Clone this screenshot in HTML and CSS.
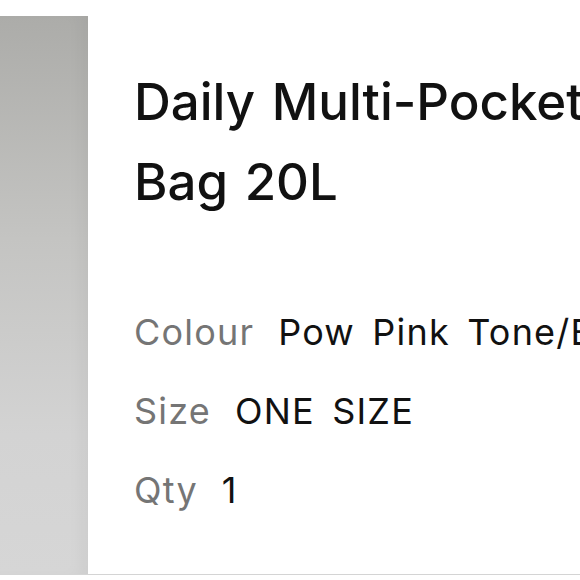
FILE: index.html
```html
<!DOCTYPE html>
<html lang="en">

<head>
    <meta charset="UTF-8">
    <title>Bag</title>
    <link rel="stylesheet" href="styles.css">
</head>

<body>
    <div class="item">
        <div class="thumb"></div>
        <div class="info">
            <h1 class="title">Daily Multi-Pocket Bag 20L</h1>
            <div class="details">
                <div class="row"><span class="label">Colour</span><span class="value">Pow Pink Tone/Black</span></div>
                <div class="row"><span class="label">Size</span><span class="value">ONE SIZE</span></div>
                <div class="row"><span class="label">Qty</span><span class="value">1</span></div>
            </div>
        </div>
    </div>
</body>

</html>
```

FILE: styles.css
```css
html,
body {
    margin: 0;
    background: #fff;
    overflow: hidden;
}

body {
    font-family: Inter, "Liberation Sans", sans-serif;
    color: #111;
    padding-top: 16px;
}

.item {
    display: flex;
    width: 760px;
    height: 558px;
    border-bottom: 1px solid #d4d4d4;
}

.thumb {
    width: 88px;
    flex-shrink: 0;
    background: linear-gradient(180deg, #acaca9 0%, #c4c4c2 40%, #d3d3d3 75%, #d6d6d6 100%);
    box-shadow: inset -14px 0 18px -10px rgba(0, 0, 0, 0.05);
}

.info {
    flex: 1;
    padding-left: 46px;
}

.title {
    max-width: 520px;
    margin: 46px 0 0;
    font-size: 51px;
    font-weight: 500;
    line-height: 80px;
    word-spacing: 3px;
}

.details {
    margin-top: 71px;
}

.row {
    display: flex;
    gap: 24px;
    font-size: 36px;
    line-height: 79px;
    letter-spacing: 1.2px;
    word-spacing: 6px;
}

.label {
    color: #757575;
}

.value {
    color: #111;
}
```
